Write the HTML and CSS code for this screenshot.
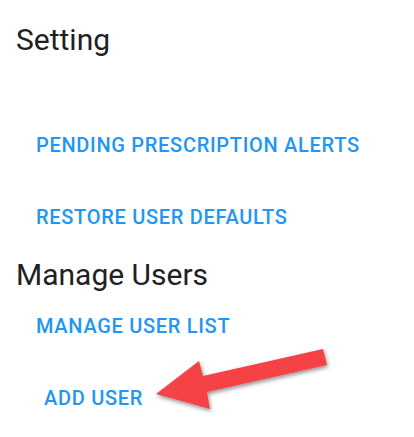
FILE: index.html
```html
<!DOCTYPE html>
<html>
<head>
<meta charset="utf-8">
<link rel="stylesheet" href="styles.css">
</head>
<body>
<div class="page">
  <h1 class="title">Setting</h1>
  <div class="section">
    <a class="btn">PENDING PRESCRIPTION ALERTS</a>
    <a class="btn">RESTORE USER DEFAULTS</a>
  </div>
  <h2 class="title sub">Manage Users</h2>
  <div class="section">
    <a class="btn">MANAGE USER LIST</a>
    <a class="btn indent">ADD USER</a>
  </div>
  <svg class="arrow" width="190" height="80" viewBox="150 340 190 80">
    <defs>
      <filter id="sh" x="-20%" y="-30%" width="140%" height="170%">
        <feDropShadow dx="1" dy="2" stdDeviation="2" flood-color="#000" flood-opacity="0.45"/>
      </filter>
    </defs>
    <polygon filter="url(#sh)" fill="#f44346" points="156,394 199,361 203,376 323,349 327,365 207,392 210,409"/>
  </svg>
</div>
</body>
</html>
```
FILE: styles.css
```css
html, body {
  margin: 0;
  padding: 0;
  background: #fff;
}
.page {
  position: relative;
  width: 414px;
  height: 437px;
  padding: 0 16px;
  box-sizing: border-box;
  font-family: Roboto, "Noto Sans", sans-serif;
  overflow: hidden;
}
.title {
  margin: 22px 0 0;
  font-size: 30px;
  line-height: 36px;
  font-weight: 400;
  color: #212121;
}
.sub {
  margin-top: 4px;
}
.section {
  display: flex;
  flex-direction: column;
  align-items: flex-start;
}
.section:first-of-type {
  margin-top: 51px;
}
.sub + .section {
  margin-top: -2.6px;
}
.btn {
  display: block;
  padding: 24px 20px;
  font-size: 20px;
  line-height: 24px;
  font-weight: 500;
  color: #2196f3;
  letter-spacing: 0.7px;
}
.indent {
  padding-left: 28px;
}
.arrow {
  position: absolute;
  left: 150px;
  top: 340px;
}
```
